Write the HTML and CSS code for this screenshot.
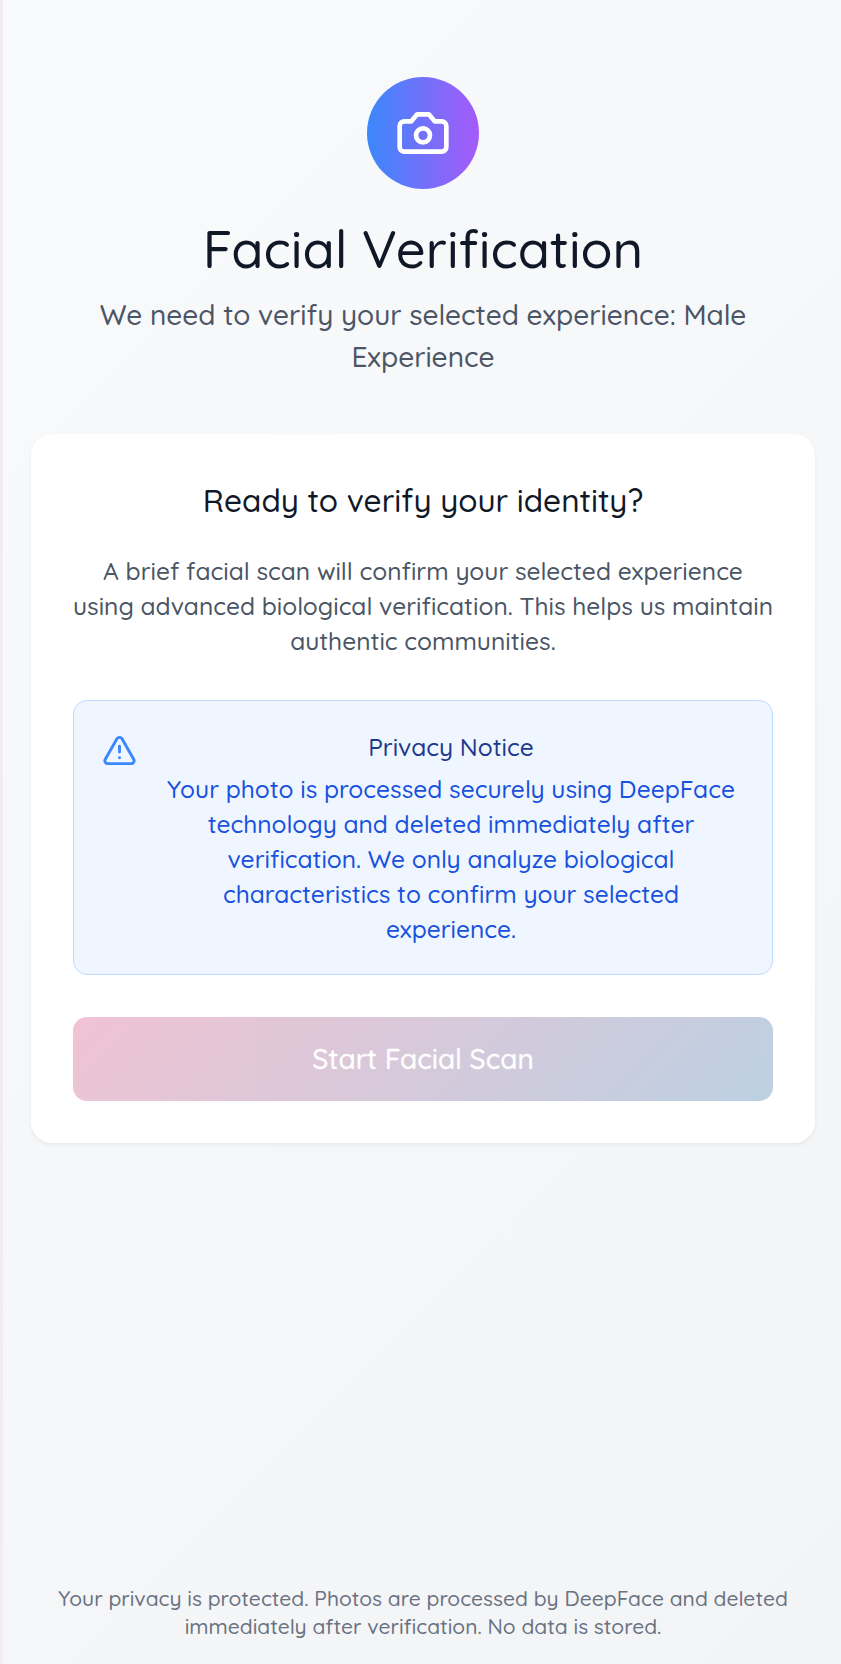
FILE: index.html
```html
<!DOCTYPE html>
<html lang="en">
<head>
<meta charset="utf-8">
<title>Facial Verification</title>
<link rel="stylesheet" href="styles.css">
</head>
<body>
<div class="page">
  <header class="header">
    <div class="badge">
      <svg class="badge-icon" viewBox="0 0 24 24"><path d="M14.5 4h-5L7 7H4a2 2 0 0 0-2 2v9a2 2 0 0 0 2 2h16a2 2 0 0 0 2-2V9a2 2 0 0 0-2-2h-3l-2.500-3z"/><circle cx="12" cy="13" r="3"/></svg>
    </div>
    <h1 class="title">Facial Verification</h1>
    <p class="subtitle">We need to verify your selected experience: Male Experience</p>
  </header>
  <main class="card">
    <h2 class="card-title">Ready to verify your identity?</h2>
    <p class="card-text">A brief facial scan will confirm your selected experience<br>using advanced biological verification. This helps us maintain<br>authentic communities.</p>
    <section class="notice">
      <svg class="notice-icon" viewBox="0 0 24 24"><path d="m21.730 18-8-14a2 2 0 0 0-3.480 0l-8 14A2 2 0 0 0 4 21h16a2 2 0 0 0 1.730-3"/><path d="M12 9v4"/><path d="M12 17h.01"/></svg>
      <div class="notice-body">
        <h3 class="notice-title">Privacy Notice</h3>
        <p class="notice-text">Your photo is processed securely using DeepFace technology and deleted immediately after verification. We only analyze biological characteristics to confirm your selected experience.</p>
      </div>
    </section>
    <button class="start" disabled>Start Facial Scan</button>
  </main>
  <footer class="footer">Your privacy is protected. Photos are processed by DeepFace and deleted immediately after verification. No data is stored.</footer>
</div>
</body>
</html>
```
FILE: styles.css
```css
* { box-sizing: border-box; margin: 0; }
html { overflow: hidden; }
body {
  height: 1664px;
  padding-left: 3px;
  overflow: hidden;
  background: #f1ecef;
  font-family: Quicksand, Lato, sans-serif;
  font-weight: 500;
}
.page {
  display: flex;
  flex-direction: column;
  width: 840px;
  height: 1664px;
  padding: 77px 28px 24px;
  background: linear-gradient(135deg, #f9fafb, #f3f4f6);
  text-align: center;
}
.header { margin-bottom: 56px; }
.badge {
  display: flex;
  align-items: center;
  justify-content: center;
  width: 112px;
  height: 112px;
  margin: 0 auto 28px;
  border-radius: 50%;
  background: linear-gradient(90deg, #3b88fc, #a65af9);
}
.badge-icon, .notice-icon {
  fill: none;
  stroke: #fff;
  stroke-width: 2;
  stroke-linecap: round;
  stroke-linejoin: round;
}
.badge-icon { width: 56px; height: 56px; }
.title { margin-bottom: 14px; color: #101828; font-size: 52.500px; font-weight: 500; line-height: 63px; }
.subtitle { color: #4a5565; font-size: 28px; line-height: 42px; }
.card {
  padding: 42px;
  border-radius: 21px;
  background: #fff;
  box-shadow: 0 2px 4px rgba(0, 0, 0, .06);
}
.card-title { margin-bottom: 28px; color: #101828; font-size: 31.500px; font-weight: 500; line-height: 49px; }
.card-text { margin: 0 -4px 42px; color: #4a5565; font-size: 24.500px; line-height: 35px; }
.notice {
  display: flex;
  gap: 21px;
  align-items: flex-start;
  margin-bottom: 42px;
  padding: 28px;
  border: 1px solid #bedbff;
  border-radius: 14px;
  background: #eff6ff;
}
.notice-icon { flex: none; width: 35px; height: 35px; margin-top: 4px; stroke: #3b88fc; }
.notice-body { flex: 1; font-size: 24.500px; line-height: 35px; }
.notice-title { margin-bottom: 7px; color: #1c398e; font-size: inherit; font-weight: 500; }
.notice-text { color: #1751de; }
.start {
  display: block;
  width: 100%;
  height: 84px;
  border: 0;
  border-radius: 14px;
  background: linear-gradient(135deg, #e187a7, #7ba3c7);
  color: #fff;
  font: 500 28px/42px Quicksand, Lato, sans-serif;
  -webkit-text-stroke: .3px #fff;
  opacity: .5;
}
.footer { margin-top: auto; color: #6a7282; font-size: 21px; line-height: 28px; }
```
